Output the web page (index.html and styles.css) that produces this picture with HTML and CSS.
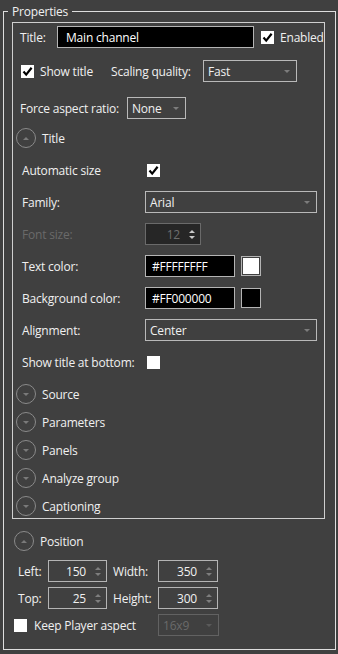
FILE: index.html
```html
<!DOCTYPE html>
<html>
<head>
<meta charset="utf-8">
<link rel="stylesheet" href="styles.css">
</head>
<body>
<fieldset class="props">
  <legend>Properties</legend>
  <div class="panel">
    <div class="row row-title">
      <span class="lbl title-lbl">Title:</span>
      <div class="tinput title-input">Main channel</div>
      <span class="check on"><svg viewBox="0 0 13 13" width="13" height="13"><path d="M2.5 6.5 L5.2 9.6 L10.6 2.8" fill="none" stroke="#000" stroke-width="2.2"/></svg></span>
      <span class="check-lbl">Enabled</span>
    </div>
    <div class="row row-show">
      <div class="show-wrap">
        <span class="check on"><svg viewBox="0 0 13 13" width="13" height="13"><path d="M2.5 6.5 L5.2 9.6 L10.6 2.8" fill="none" stroke="#000" stroke-width="2.2"/></svg></span>
        <span class="check-lbl">Show title</span>
      </div>
      <span class="lbl scale-lbl">Scaling quality:</span>
      <div class="dd scale-dd"><span>Fast</span></div>
    </div>
    <div class="row row-aspect">
      <span class="lbl aspect-lbl">Force aspect ratio:</span>
      <div class="dd aspect-dd"><span>None</span></div>
    </div>

    <div class="exp exp-title"><span class="circ up"></span><span>Title</span></div>

    <div class="title-grid">
      <span class="lbl">Automatic size</span>
      <div class="ctl"><span class="check on shift"><svg viewBox="0 0 13 13" width="13" height="13"><path d="M2.5 6.5 L5.2 9.6 L10.6 2.8" fill="none" stroke="#000" stroke-width="2.2"/></svg></span></div>

      <span class="lbl">Family:</span>
      <div class="ctl"><div class="dd wide-dd"><span>Arial</span></div></div>

      <span class="lbl disabled">Font size:</span>
      <div class="ctl"><div class="spin spin-dis"><span class="val">12</span><span class="arrows"><i class="a-up"></i><i class="a-dn"></i></span></div></div>

      <span class="lbl">Text color:</span>
      <div class="ctl"><div class="tinput color-input">#FFFFFFFF</div><span class="swatch white"></span></div>

      <span class="lbl">Background color:</span>
      <div class="ctl"><div class="tinput color-input">#FF000000</div><span class="swatch black"></span></div>

      <span class="lbl">Alignment:</span>
      <div class="ctl"><div class="dd wide-dd"><span>Center</span></div></div>

      <span class="lbl">Show title at bottom:</span>
      <div class="ctl"><span class="check shift"></span></div>
    </div>

    <div class="exp-list">
      <div class="exp"><span class="circ"></span><span>Source</span></div>
      <div class="exp"><span class="circ"></span><span>Parameters</span></div>
      <div class="exp"><span class="circ"></span><span>Panels</span></div>
      <div class="exp"><span class="circ"></span><span>Analyze group</span></div>
      <div class="exp"><span class="circ"></span><span>Captioning</span></div>
    </div>
  </div>

  <div class="exp exp-pos"><span class="circ up"></span><span>Position</span></div>

  <div class="pos-grid">
    <span class="lbl pl">Left:</span>
    <div class="spin spin-a"><span class="val">150</span><span class="arrows"><i class="a-up"></i><i class="a-dn"></i></span></div>
    <span class="lbl pl2">Width:</span>
    <div class="spin spin-b"><span class="val">350</span><span class="arrows"><i class="a-up"></i><i class="a-dn"></i></span></div>

    <span class="lbl pl">Top:</span>
    <div class="spin spin-a"><span class="val">25</span><span class="arrows"><i class="a-up"></i><i class="a-dn"></i></span></div>
    <span class="lbl pl2">Height:</span>
    <div class="spin spin-b"><span class="val">300</span><span class="arrows"><i class="a-up"></i><i class="a-dn"></i></span></div>

    <div class="keep"><span class="check"></span><span class="check-lbl">Keep Player aspect</span></div>
    <div class="dd dd-dis ratio-dd"><span>16x9</span></div>
  </div>
</fieldset>
</body>
</html>
```

FILE: styles.css
```css
* { box-sizing: border-box; }
html, body { margin: 0; padding: 0; background: #404040; }
body {
  font-family: "Open Sans", "Liberation Sans", sans-serif;
  font-size: 12px;
  letter-spacing: -0.2px;
  color: #f0f0f0;
  width: 338px;
  height: 654px;
  overflow: hidden;
}

.props {
  margin: 3px 0 0 3px;
  padding: 0 0 13px 0;
  width: 333px;
  min-width: 0;
  border: 1px solid #dedede;
}
.props legend {
  margin-left: 4px;
  padding: 0 4px 0 4px;
  line-height: 17px;
  height: 17px;
}

.panel {
  margin: 2px 0 0 8px;
  width: 313px;
  border: 1px solid #cfcfcf;
  padding: 3px 0 2px 0;
}

.row { display: flex; align-items: center; height: 22px; }
.lbl { white-space: nowrap; }
.row-title { padding-left: 7px; }
.title-lbl { width: 37px; }
.tinput {
  height: 22px;
  background: #000;
  border: 1px solid #b4b4b4;
  display: flex;
  align-items: center;
  color: #fff;
}
.title-input { width: 197px; padding-left: 8px; }
.row-title .check { margin-left: 7px; }
.check-lbl { margin-left: 6px; }

.check {
  display: inline-block;
  width: 13px;
  height: 13px;
  background: #fff;
  flex: none;
}
.check svg { display: block; }

.row-show { margin-top: 12px; padding-left: 8px; }
.show-wrap { display: flex; align-items: center; width: 90px; }
.scale-lbl { width: 92px; }
.scale-dd { width: 94px; }

.row-aspect { margin-top: 15px; padding-left: 7px; }
.aspect-lbl { width: 107px; }
.aspect-dd { width: 59px; }

.dd {
  height: 22px;
  border: 1px solid #b9b9b9;
  display: flex;
  align-items: center;
  padding: 0 6px 0 4px;
}
.dd::after {
  content: "";
  margin-left: auto;
  border-left: 3px solid transparent;
  border-right: 3px solid transparent;
  border-top: 3px solid #7c7c7c;
  margin-top: 1px;
}
.dd-dis { border-color: #626262; color: #6a6a6a; }
.dd-dis::after { border-top-color: #5a5a5a; }

.exp { display: flex; align-items: center; height: 20px; }
.circ {
  width: 20px;
  height: 20px;
  border: 1px solid #8a8a8a;
  border-radius: 50%;
  display: flex;
  align-items: center;
  justify-content: center;
  margin-right: 6px;
  flex: none;
}
.circ::after {
  content: "";
  border-left: 3px solid transparent;
  border-right: 3px solid transparent;
  border-top: 3px solid #7a7a7a;
}
.circ.up::after {
  border-top: 0;
  border-bottom: 3px solid #7a7a7a;
}
.exp-title { margin-top: 9px; padding-left: 3px; }

.title-grid {
  margin-top: 11px;
  padding-left: 9px;
  display: grid;
  grid-template-columns: 123px 1fr;
  grid-auto-rows: 22px;
  row-gap: 10px;
  align-items: center;
}
.ctl { display: flex; align-items: center; height: 22px; }
.shift { margin-left: 2px; }
.disabled { color: #6a6a6a; }
.wide-dd { width: 172px; }
.color-input { width: 90px; padding-left: 6px; }
.swatch {
  width: 20px;
  height: 20px;
  margin-left: 6px;
  border: 1px solid #b4b4b4;
}
.swatch.white { background: #fff; box-shadow: inset 0 0 0 1px #404040; }
.swatch.black { background: #000; }

.spin {
  height: 22px;
  border: 1px solid #b4b4b4;
  display: flex;
  align-items: center;
  justify-content: flex-end;
  padding-right: 5px;
}
.spin .val { margin-right: 9px; }
.arrows { display: flex; flex-direction: column; gap: 3px; }
.a-up, .a-dn {
  display: block;
  width: 0;
  height: 0;
  border-left: 3px solid transparent;
  border-right: 3px solid transparent;
}
.a-up { border-bottom: 3px solid #7e7e7e; }
.a-dn { border-top: 3px solid #7e7e7e; }
.spin-dis { width: 56px; background: #262626; border-color: #6a6a6a; color: #6e6e6e; }
.spin-dis .a-up { border-bottom-color: #c8c8c8; }
.spin-dis .a-dn { border-top-color: #c8c8c8; }

.exp-list {
  margin-top: 11px;
  padding-left: 3px;
  display: flex;
  flex-direction: column;
  gap: 8px;
}

.exp-pos { margin-top: 12px; padding-left: 10px; }

.pos-grid {
  margin-top: 9px;
  padding-left: 10px;
  display: grid;
  grid-template-columns: 34px 59px 51px 61px;
  grid-auto-rows: 22px;
  row-gap: 5px;
  align-items: center;
}
.pl { padding-left: 4px; }
.pl2 { padding-left: 6px; }
.spin-a { width: 59px; }
.spin-b { width: 60px; }
.keep { grid-column: 1 / 4; display: flex; align-items: center; }
.keep .check-lbl { margin-left: 7px; }
.ratio-dd { width: 61px; }
```
